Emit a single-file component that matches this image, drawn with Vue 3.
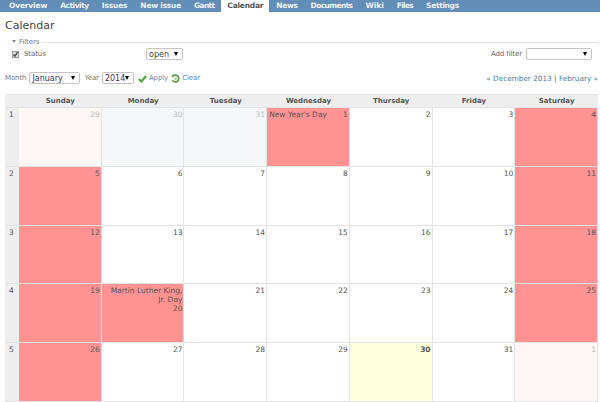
<script setup>
const tabs = [
  { t: 'Overview', s: -0.17 }, { t: 'Activity', s: -0.47 }, { t: 'Issues', s: -0.17 },
  { t: 'New issue', s: -0.24 }, { t: 'Gantt', s: -0.68 }, { t: 'Calendar', s: -0.22, a: true },
  { t: 'News', s: -0.37 }, { t: 'Documents', s: -0.62 }, { t: 'Wiki', s: 0 },
  { t: 'Files', s: -0.72 }, { t: 'Settings', s: -0.34 }
]
const days = ['Sunday','Monday','Tuesday','Wednesday','Thursday','Friday','Saturday']
const h = 'holiday', o = 'other', g = 'grey'
const weeks = [
  { n: 1, cells: [{d:29,c:o},{d:30,c:g},{d:31,c:g},{d:1,c:h,t:"New Year's Day",left:true},{d:2},{d:3},{d:4,c:h}] },
  { n: 2, cells: [{d:5,c:h},{d:6},{d:7},{d:8},{d:9},{d:10},{d:11,c:h}] },
  { n: 3, cells: [{d:12,c:h},{d:13},{d:14},{d:15},{d:16},{d:17},{d:18,c:h}] },
  { n: 4, cells: [{d:19,c:h},{d:20,c:h,t:'Martin Luther King, Jr. Day'},{d:21},{d:22},{d:23},{d:24},{d:25,c:h}] },
  { n: 5, cells: [{d:26,c:h},{d:27},{d:28},{d:29},{d:30,c:'today'},{d:31},{d:1,c:o}] }
]
</script>

<template>
  <div class="page">
    <nav class="nav">
      <a v-for="t in tabs" :key="t.t" class="tab" :class="{ active: t.a }" :style="{ letterSpacing: t.s + 'px' }">{{ t.t }}</a>
    </nav>
    <main class="content">
      <h2 class="title">Calendar</h2>
      <fieldset class="filters">
        <legend class="legend"><span class="caret"></span>Filters</legend>
        <div class="filter-row">
          <label class="status">
            <svg class="check" width="7" height="7" viewBox="0 0 7 7"><rect x="0.5" y="0.5" width="6" height="6" fill="#ddd" stroke="#999"/><path d="M1.5 3.5 L3 5.2 L5.6 1.2" fill="none" stroke="#444" stroke-width="1.2"/></svg>
            Status
          </label>
          <span class="sel sel-open"><select><option>open</option></select></span>
          <span class="add">Add filter</span>
          <span class="sel sel-add"><select><option></option></select></span>
        </div>
      </fieldset>
      <div class="bar">
        <span class="lbl">Month</span>
        <span class="sel sel-month"><select><option>January</option></select></span>
        <span class="lbl year">Year</span>
        <span class="sel sel-year"><select><option>2014</option></select></span>
        <svg class="ic" width="9" height="9" viewBox="0 0 10 10"><path d="M1 5.5 L3.8 8.3 L9 2.2" fill="none" stroke="#4fa23c" stroke-width="2.4"/></svg>
        <a class="link apply">Apply</a>
        <svg class="ic ic2" width="9" height="9" viewBox="0 0 10 10"><path d="M2 2.4 A3.8 3.8 0 1 1 1.6 7" fill="none" stroke="#5f9e4b" stroke-width="2"/><path d="M0.5 0.8 L4.4 1 L2 4.2 Z" fill="#5f9e4b"/><circle cx="5.2" cy="5.2" r="1.5" fill="#a9d092"/></svg>
        <a class="link clear">Clear</a>
        <span class="pager"><a class="link">« December 2013</a> | <a class="link">February »</a></span>
      </div>
      <div class="cal">
        <div class="head corner"></div>
        <div v-for="d in days" :key="d" class="head">{{ d }}</div>
        <template v-for="w in weeks" :key="w.n">
          <div class="wk">{{ w.n }}</div>
          <div v-for="(c, i) in w.cells" :key="i" class="cell" :class="c.c">
            <div v-if="c.left" class="inline"><span>{{ c.t }}</span><span>{{ c.d }}</span></div>
            <template v-else>
              <div v-if="c.t">{{ c.t }}</div>
              <div>{{ c.d }}</div>
            </template>
          </div>
        </template>
      </div>
    </main>
  </div>
</template>

<style>
html, body { margin: 0; background: #fff; }
</style>

<style scoped>
.page { width: 600px; height: 402px; overflow: hidden; font-family: "DejaVu Sans", sans-serif; font-size: 7px; color: #484848; background: #fff; }
.nav { display: flex; height: 12px; padding-left: 2.5px; background: #628db6; }
.tab { padding: 0 6.5px; font-size: 7.5px; font-weight: bold; line-height: 12px; color: #eef3f8; }
.tab.active { padding: 0 6px; margin: 0 0.5px; background: #fff; color: #555; height: 13px; }
.content { padding: 0 2px 0 5px; }
.title { margin: 0; padding-top: 7px; height: 22px; box-sizing: border-box; font-size: 11px; line-height: 14px; font-weight: normal; color: #444; }
.filters { margin: 4px 0 0; padding: 0; border: 0; border-top: 1px solid #e4e4e4; height: 25px; min-width: 0; }
.legend { padding: 0 2px 0 7px; margin: 0; font-size: 7px; line-height: 9px; color: #6a7a8a; letter-spacing: -0.1px; }
.caret { display: inline-block; width: 0; height: 0; border: 2px solid transparent; border-top: 3px solid #7a8a9a; border-bottom: 0; margin-right: 3px; vertical-align: 1px; }
.filter-row { display: flex; align-items: center; height: 14px; padding-left: 7px; }
.status { display: flex; align-items: center; width: 134px; font-size: 7px; color: #666; letter-spacing: -0.1px; }
.check { margin-right: 5px; flex: none; }
.sel { position: relative; display: inline-block; height: 12px; box-sizing: border-box; border: 1px solid #c4c4c4; border-radius: 2px; background: #fff; flex: none; }
.sel::after { content: ""; position: absolute; right: 4px; top: 3px; width: 0; height: 0; border: 2px solid transparent; border-top: 4px solid #000; border-bottom: 0; }
.sel select { display: block; width: 100%; height: 100%; padding: 0 0 0 2px; margin: 0; border: 0; background: transparent; appearance: none; font: 8px "DejaVu Sans", sans-serif; color: #444; outline: 0; }
.sel-open { width: 37px; }
.add { margin-left: auto; font-size: 7px; color: #666; margin-right: 4px; letter-spacing: -0.1px; }
.sel-add { width: 66px; margin-right: 6px; }
.bar { display: flex; align-items: center; height: 14px; margin-top: 7px; font-size: 7px; letter-spacing: -0.1px; }
.lbl { color: #777; }
.sel-month { width: 51px; margin-left: 3px; }
.year { margin-left: 4px; }
.sel-year { width: 32px; margin-left: 3px; }
.sel-year select { color: #5a2a4a; }
.sel-month select { color: #33335a; }
.ic { margin-left: 4px; flex: none; }
.ic2 { margin-left: 3px; }
.link { color: #5a8ab0; }
.apply { margin-left: 2px; }
.clear { margin-left: 2px; }
.pager { margin-left: auto; font-size: 7.3px; color: #666; letter-spacing: 0; }
.pager .link { color: #4a7ca4; }
.cal { display: grid; grid-template-columns: 14px repeat(7, 1fr); grid-template-rows: 13px repeat(5, 58.8px); width: 593px; margin-top: 9px; background: #fff; border-bottom: 1px solid #e4e4e4; }
.head { background: #eee; font-weight: bold; font-size: 7px; line-height: 13px; text-align: center; color: #555; border-top: 1px solid #e4e4e4; box-sizing: border-box; }
.wk { background: #eee; padding: 2px 0 0 4px; font-size: 7.5px; line-height: 9px; color: #555; border-top: 1px solid #e4e4e4; }
.cell { box-sizing: border-box; padding: 2px 1px 0 2px; border: 1px solid #e4e4e4; border-width: 1px 1px 0 0; text-align: right; font-size: 7.5px; line-height: 9px; color: #555; min-width: 0; }
.cell.holiday { background: #ff9393; }
.cell.other { background: #fff6f6; color: #bbb; }
.cell.grey { background: #f5f6f8; color: #bbb; }
.cell.today { background: #ffffdd; font-weight: bold; }
.inline { display: flex; justify-content: space-between; }
</style>
